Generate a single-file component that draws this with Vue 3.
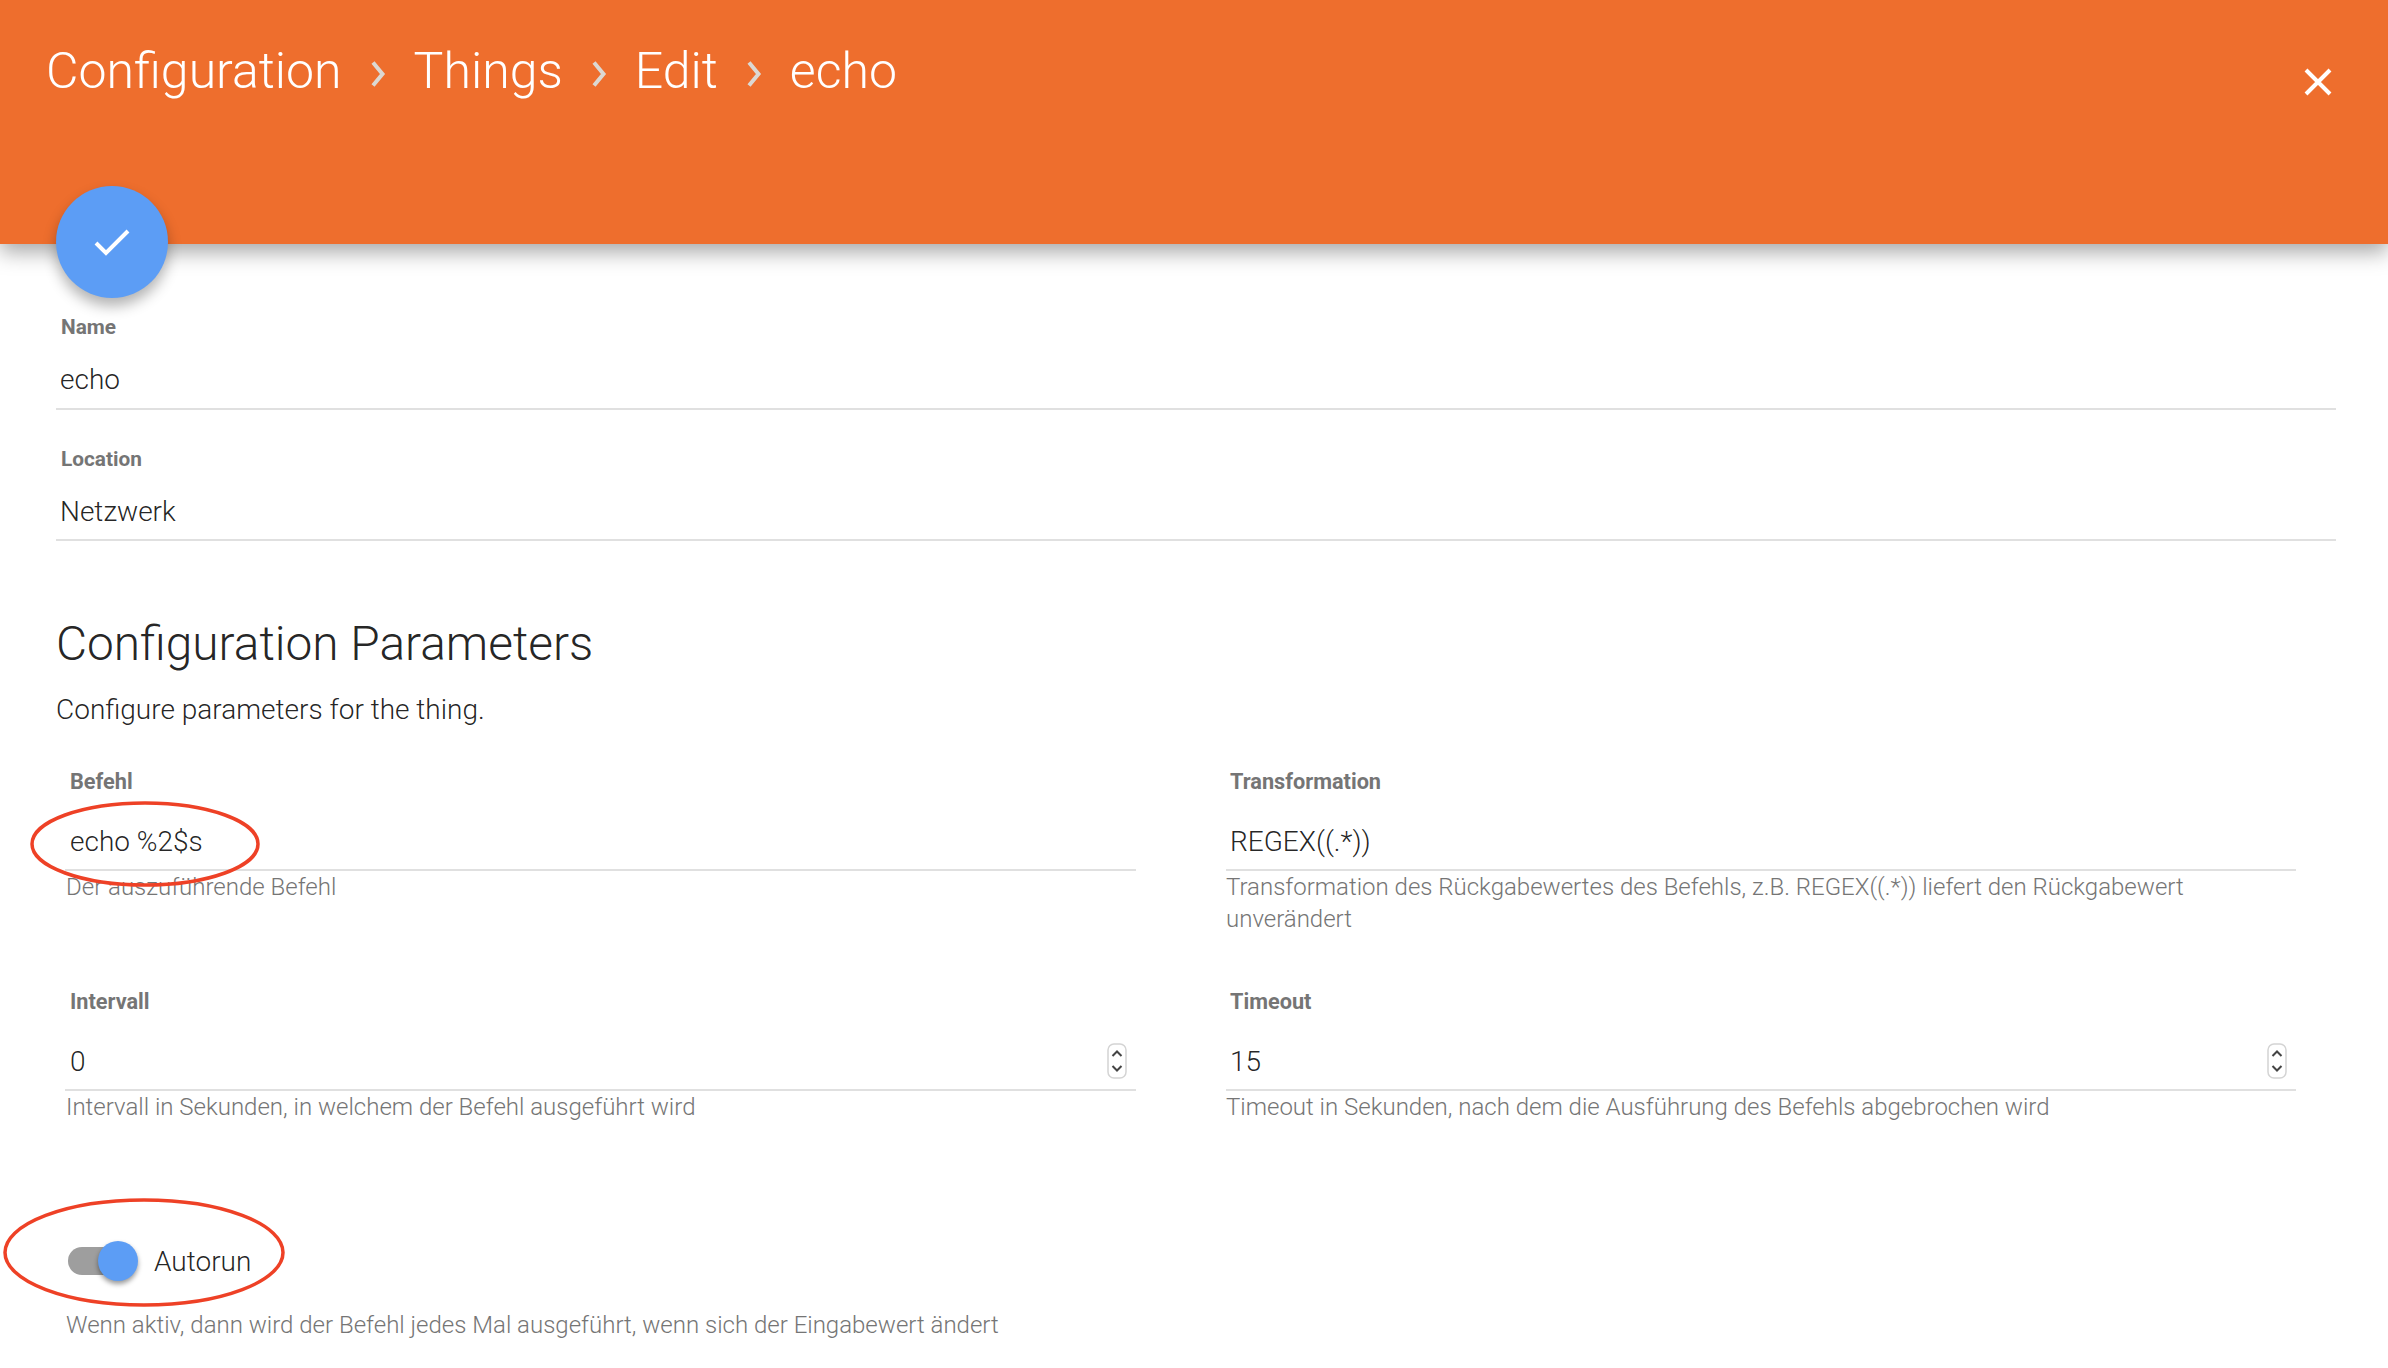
<script setup>
const crumbs = ['Configuration', 'Things', 'Edit', 'echo']
const params = [
  { label: 'Befehl', value: 'echo %2$s', help: 'Der auszuführende Befehl' },
  { label: 'Transformation', value: 'REGEX((.*))', help: 'Transformation des Rückgabewertes des Befehls, z.B. REGEX((.*)) liefert den Rückgabewert unverändert' },
  { label: 'Intervall', value: '0', help: 'Intervall in Sekunden, in welchem der Befehl ausgeführt wird', spin: true },
  { label: 'Timeout', value: '15', help: 'Timeout in Sekunden, nach dem die Ausführung des Befehls abgebrochen wird', spin: true },
]
</script>

<template>
  <div class="page">
    <header class="bar">
      <nav class="crumbs">
        <template v-for="(c, i) in crumbs" :key="c">
          <span class="crumb">{{ c }}</span>
          <svg v-if="i < crumbs.length - 1" class="sep" width="16" height="26" viewBox="0 0 16 26"><path d="M3 1.5 L12.5 13 L3 24.5" fill="none" stroke="#dcd8d2" stroke-width="4"/></svg>
        </template>
      </nav>
      <svg class="close" width="30" height="30" viewBox="0 0 30 30"><path d="M3 3 L27 27 M27 3 L3 27" stroke="#fff" stroke-width="4" fill="none"/></svg>
      <button class="fab">
        <svg width="40" height="32" viewBox="0 0 40 32"><path d="M4 17 L14 27 L36 5" fill="none" stroke="#fff" stroke-width="4"/></svg>
      </button>
    </header>

    <main class="content">
      <div class="plain">
        <label class="lab">Name</label>
        <div class="val">echo</div>
      </div>
      <div class="plain second">
        <label class="lab">Location</label>
        <div class="val">Netzwerk</div>
      </div>

      <h2 class="title">Configuration Parameters</h2>
      <p class="desc">Configure parameters for the thing.</p>

      <div class="grid">
        <div v-for="p in params" :key="p.label" class="field">
          <label class="lab inset">{{ p.label }}</label>
          <div class="val inset row">
            <span>{{ p.value }}</span>
            <svg v-if="p.spin" class="spin" width="20" height="36" viewBox="0 0 20 36">
              <rect x="1" y="1" width="18" height="34" rx="6" fill="#fff" stroke="#d4d4d4" stroke-width="1.5"/>
              <path d="M5.5 13 L10 8.5 L14.5 13 M5.5 23 L10 27.5 L14.5 23" fill="none" stroke="#444" stroke-width="2"/>
            </svg>
          </div>
          <div class="help">{{ p.help }}</div>
        </div>
      </div>

      <div class="switch-row">
        <span class="switch"><span class="track"></span><span class="thumb"></span></span>
        <span class="switch-label">Autorun</span>
      </div>
      <div class="help switch-help">Wenn aktiv, dann wird der Befehl jedes Mal ausgeführt, wenn sich der Eingabewert ändert</div>
    </main>

    <svg class="marks" width="2388" height="1368" viewBox="0 0 2388 1368">
      <ellipse cx="145" cy="844" rx="113" ry="41" fill="none" stroke="#ee4126" stroke-width="3.5"/>
      <ellipse cx="144" cy="1252.5" rx="139" ry="52.5" fill="none" stroke="#ee4126" stroke-width="3.5"/>
    </svg>
  </div>
</template>

<style>
html, body { margin: 0; background: #fff; }
</style>

<style scoped>
.page {
  position: relative;
  width: 2388px;
  height: 1368px;
  overflow: hidden;
  background: #fff;
  font-family: Roboto, "Liberation Sans", sans-serif;
  color: rgba(0, 0, 0, 0.87);
}
.bar {
  position: relative;
  height: 244px;
  background: #ee6e2d;
  box-shadow: 0 8px 20px rgba(0, 0, 0, 0.35);
  z-index: 1;
}
.crumbs {
  display: flex;
  align-items: center;
  gap: 28px;
  padding: 40px 0 0 46px;
  height: 62px;
  font-size: 50px;
  line-height: 62px;
  font-weight: 300;
  color: #fff;
}
.sep { margin-top: 6px; }
.close { position: absolute; right: 55px; top: 67px; }
.fab {
  position: absolute;
  left: 56px;
  top: 186px;
  width: 112px;
  height: 112px;
  border: 0;
  padding: 0;
  border-radius: 50%;
  background: #5c9df5;
  display: flex;
  align-items: center;
  justify-content: center;
  box-shadow: 0 8px 14px rgba(0, 0, 0, 0.3);
}
.content { padding: 70px 52px 0 56px; }
.lab {
  display: block;
  font-size: 21.7px;
  line-height: 26px;
  font-weight: 700;
  color: #757575;
}
.plain .lab { font-size: 20.8px; padding-left: 1px; }
.val {
  font-size: 28px;
  line-height: 38px;
  font-weight: 300;
}
.plain {
  display: flex;
  flex-direction: column;
  gap: 21px;
  height: 94px;
  padding-left: 4px;
  box-shadow: 0 2px 0 #e0e0e0;
}
.second { margin-top: 37px; padding-top: 1px; height: 93px; }
.title {
  margin: 75px 0 0;
  font-size: 47.8px;
  line-height: 60px;
  font-weight: 300;
}
.desc {
  margin: 18px 0 0;
  font-size: 28px;
  line-height: 36px;
  font-weight: 300;
}
.grid {
  display: grid;
  grid-template-columns: 1071px 1070px;
  column-gap: 90px;
  margin: 41px 0 0 9px;
  grid-template-rows: 220px 250px;
}
.field { min-width: 0; }
.inset { padding-left: 5px; }
.field:nth-child(even) .inset { padding-left: 4px; }
.field .val {
  margin-top: 28px;
  height: 46px;
  border-bottom: 2px solid #e0e0e0;
}
.row { display: flex; justify-content: space-between; align-items: flex-start; padding-right: 9px; }
.help {
  margin-top: 0;
  font-size: 24px;
  line-height: 32px;
  font-weight: 300;
  color: #757575;
}
.field:nth-child(odd) .help { padding-left: 1px; }
.switch-row {
  display: flex;
  align-items: center;
  gap: 14px;
  margin: 0 0 0 12px;
  height: 44px;
}
.switch { position: relative; width: 72px; height: 44px; display: block; }
.track { position: absolute; left: 0; top: 8px; width: 64px; height: 28px; border-radius: 14px; background: #9e9e9e; }
.thumb { position: absolute; left: 30px; top: 2px; width: 40px; height: 40px; border-radius: 50%; background: #5c9df5; box-shadow: 0 3px 5px rgba(0,0,0,0.4); }
.switch-label { font-size: 28px; font-weight: 300; }
.switch-help { margin: 26px 0 0 10px; }
.marks { position: absolute; left: 0; top: 0; z-index: 2; pointer-events: none; }
</style>
